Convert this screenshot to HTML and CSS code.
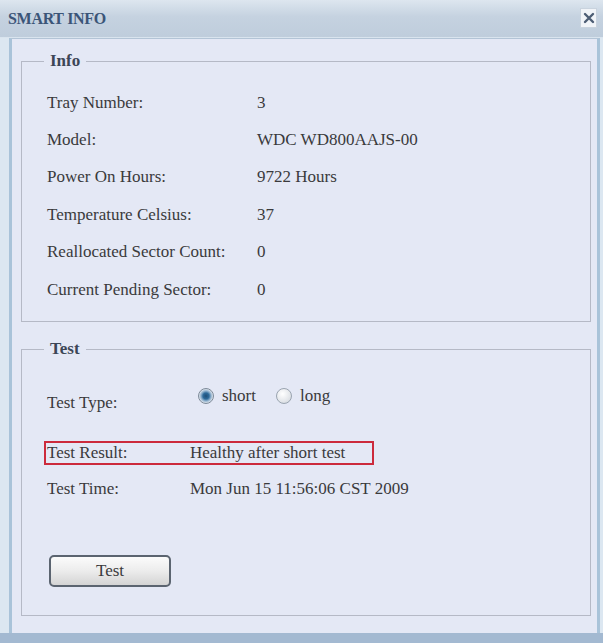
FILE: index.html
```html
<!DOCTYPE html>
<html>
<head>
<meta charset="utf-8">
<link rel="stylesheet" href="styles.css">
</head>
<body>
<div class="window">
  <div class="titlebar">
    <span class="title">SMART INFO</span>
    <span class="close">
      <svg width="12" height="12" viewBox="0 0 12 12"><path d="M2 2 L10 10 M10 2 L2 10" stroke="#4d5d74" stroke-width="2.4" stroke-linecap="round"/></svg>
    </span>
  </div>
  <div class="main">
    <div class="panel">
      <fieldset class="group info">
        <legend>Info</legend>
        <div class="row"><span class="label">Tray Number:</span><span>3</span></div>
        <div class="row"><span class="label">Model:</span><span>WDC WD800AAJS-00</span></div>
        <div class="row"><span class="label">Power On Hours:</span><span>9722 Hours</span></div>
        <div class="row"><span class="label">Temperature Celsius:</span><span>37</span></div>
        <div class="row"><span class="label">Reallocated Sector Count:</span><span>0</span></div>
        <div class="row"><span class="label">Current Pending Sector:</span><span>0</span></div>
      </fieldset>
      <fieldset class="group test">
        <legend>Test</legend>
        <div class="trow type">
          <span class="tlabel">Test Type:</span>
          <span class="radios">
            <label class="opt"><span class="radio checked"></span>short</label>
            <label class="opt"><span class="radio"></span>long</label>
          </span>
        </div>
        <div class="trow result">
          <span class="tlabel">Test Result:</span><span>Healthy after short test</span>
        </div>
        <div class="trow time">
          <span class="tlabel">Test Time:</span><span>Mon Jun 15 11:56:06 CST 2009</span>
        </div>
        <button class="btn">Test</button>
      </fieldset>
    </div>
  </div>
  <div class="bottom"></div>
</div>
</body>
</html>
```

FILE: styles.css
```css
html, body {
  margin: 0;
  padding: 0;
}
body {
  width: 603px;
  height: 643px;
  overflow: hidden;
  background: #dce7f1;
  font-family: "Liberation Serif", "Times New Roman", serif;
  font-size: 17px;
  color: #3a3a3c;
}
.window {
  display: flex;
  flex-direction: column;
  height: 643px;
}
.titlebar {
  height: 38px;
  box-sizing: border-box;
  display: flex;
  align-items: center;
  justify-content: space-between;
  padding: 0 6px 0 8px;
  background: linear-gradient(#dde6ef, #c5d2e0 45%, #bfcddc);
  border-bottom: 1px solid #d9e4ee;
}
.title {
  font-weight: bold;
  font-size: 16px;
  color: #3b5578;
  letter-spacing: -0.3px;
}
.close {
  width: 17px;
  height: 20px;
  box-sizing: border-box;
  background: #f1f4f8;
  border: 1px solid #c9d3de;
  display: flex;
  align-items: center;
  justify-content: center;
  margin-top: -1px;
}
.main {
  flex: 1;
  display: flex;
  padding: 0 3px 0 9px;
}
.panel {
  flex: 1;
  background: #e4e8f5;
  border-left: 3px solid #a9c3d9;
  border-right: 3px solid #a9c3d9;
  border-top: 1px solid #b3c4d6;
  padding: 11px 6px 0 9px;
}
.bottom {
  height: 10px;
  background: #a3b9d1;
}
.group {
  margin: 0;
  border: 1px solid #b5b9c6;
  padding: 12px 10px 13px 22px;
  min-width: 0;
}
.group legend {
  font-weight: bold;
  line-height: 22px;
  padding: 0 6px;
  color: #3c4656;
}
.row {
  display: flex;
  height: 37.4px;
  align-items: center;
  padding-left: 3px;
}
.label {
  width: 210px;
}
.test {
  margin-top: 16px;
  padding-top: 24px;
  padding-bottom: 28px;
}
.trow {
  display: flex;
  align-items: center;
  padding-left: 3px;
}
.tlabel {
  width: 143px;
}
.type {
  height: 38px;
}
.radios {
  display: flex;
  align-items: center;
  margin-bottom: 14px;
  margin-left: 8px;
}
.opt {
  display: flex;
  align-items: center;
  margin-right: 20px;
}
.radio {
  width: 14px;
  height: 14px;
  border-radius: 50%;
  border: 1px solid #9aa4b0;
  background: radial-gradient(circle at 40% 35%, #ffffff, #e3e6ea 60%, #c9ced5);
  margin-right: 8px;
  display: inline-block;
}
.radio.checked {
  background: radial-gradient(circle at 50% 50%, #1f4e76 0, #2d6a9a 3px, #8fb0cc 5px, #dfe6ee 7px);
  border-color: #7d8a99;
}
.result {
  margin-top: 19px;
  width: 330px;
  height: 24px;
  box-sizing: border-box;
  border: 2px solid #cc2a3c;
  padding-left: 1px;
}
.time {
  margin-top: 12px;
  height: 24px;
}
.btn {
  display: block;
  margin: 54px 0 0 5px;
  width: 122px;
  height: 32px;
  border: 2px solid #5b6470;
  border-radius: 5px;
  background: linear-gradient(#fbfbfb, #ececec 50%, #d4d4d4);
  font-family: "Liberation Serif", "Times New Roman", serif;
  font-size: 17px;
  color: #3a3a3c;
  padding: 0;
}
```
